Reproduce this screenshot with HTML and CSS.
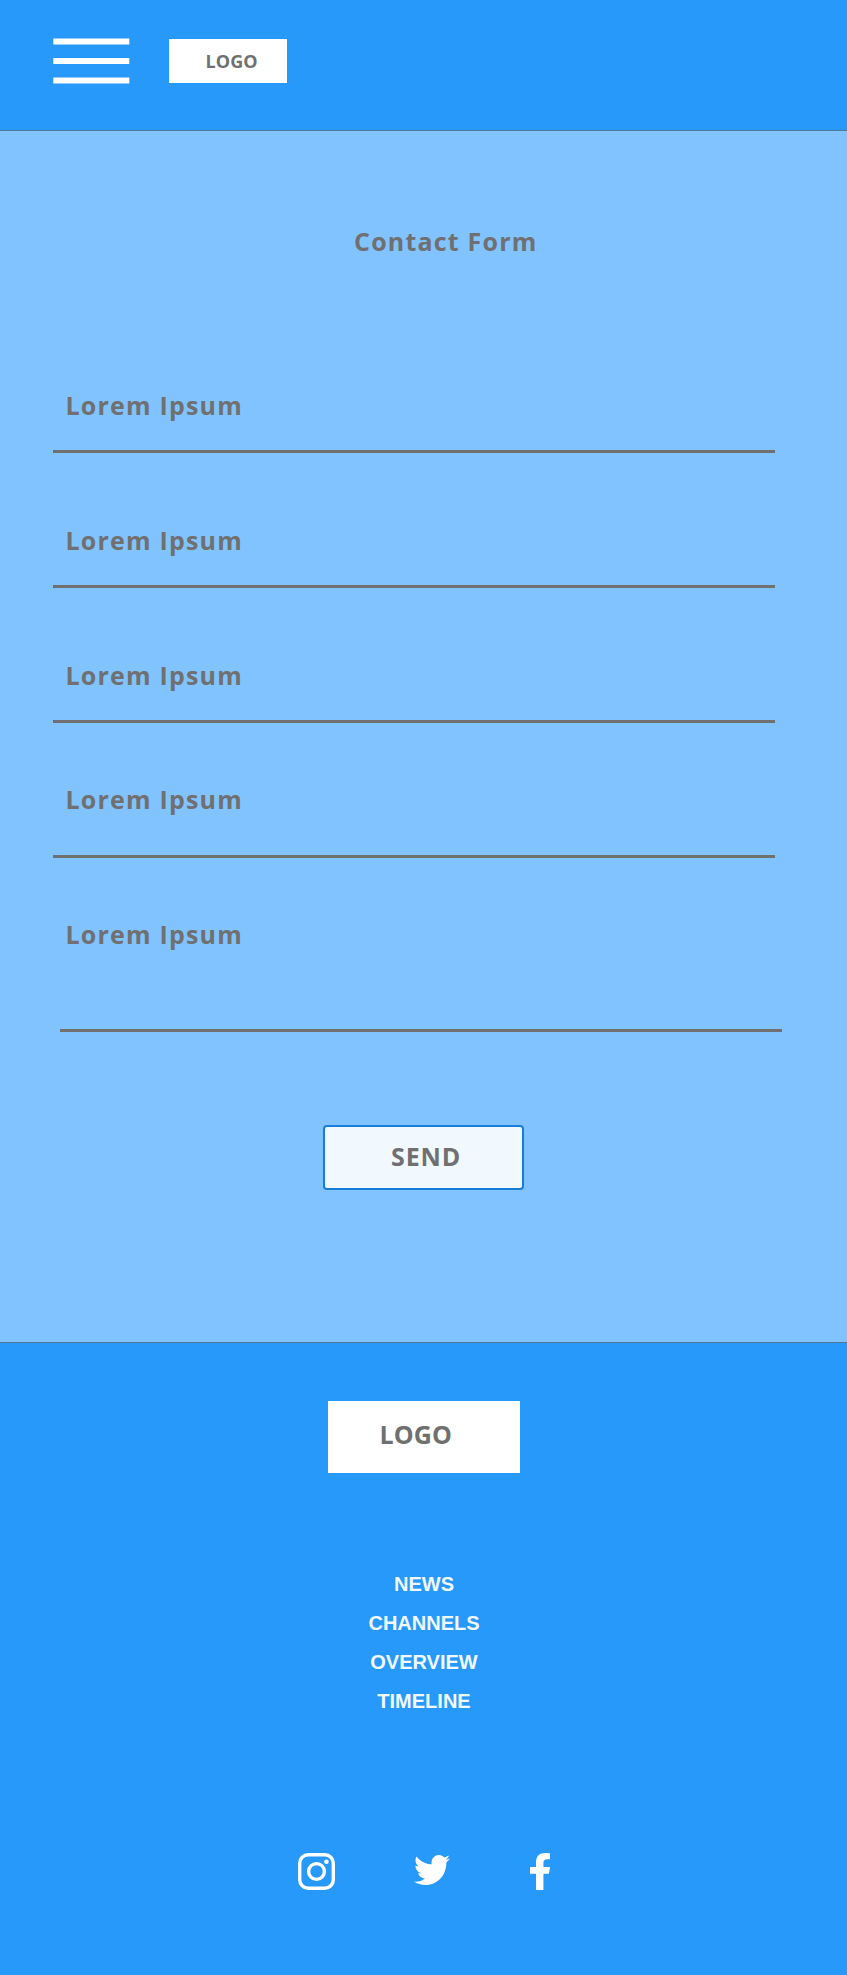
FILE: index.html
```html
<!DOCTYPE html>
<html lang="en">
<head>
<meta charset="utf-8">
<title>Contact Form</title>
<link rel="stylesheet" href="styles.css">
</head>
<body>
<header class="topbar">
  <svg class="menu" viewBox="0 0 78 48" width="78" height="48" fill="#fff" aria-label="Menu"><path d="M.3 .5h76v6H.3zM.3 20h76v6H.3zM.3 39.5h76v6H.3z"/></svg>
  <div class="logo logo-small"><span>LOGO</span></div>
</header>
<main class="content">
  <h1 class="title">Contact Form</h1>
  <form class="form">
    <label class="field field-first"><span>Lorem Ipsum</span></label>
    <label class="field"><span>Lorem Ipsum</span></label>
    <label class="field"><span>Lorem Ipsum</span></label>
    <label class="field field-near"><span>Lorem Ipsum</span></label>
    <label class="field field-message"><span>Lorem Ipsum</span></label>
    <button class="send" type="button"><span>SEND</span></button>
  </form>
</main>
<footer class="footer">
  <div class="logo logo-large"><span>LOGO</span></div>
  <nav class="links"><a>NEWS</a><a>CHANNELS</a><a>OVERVIEW</a><a>TIMELINE</a></nav>
  <div class="social">
    <svg class="instagram" viewBox="0 0 38 38" width="38" height="38"><rect x="1.7" y="1.7" width="33.6" height="33.6" rx="8.5" fill="none" stroke="#fff" stroke-width="3.4"/><circle cx="18.5" cy="18.5" r="7.9" fill="none" stroke="#fff" stroke-width="3.4"/><circle cx="28.4" cy="8.8" r="2.3" fill="#fff"/></svg>
    <svg class="twitter" viewBox="0 48 512 416" width="36" height="30" preserveAspectRatio="none"><path fill="#fff" d="M459.37 151.716c.325 4.548.325 9.097.325 13.645 0 138.72-105.583 298.558-298.558 298.558-59.452 0-114.68-17.219-161.137-47.106 8.447.974 16.568 1.299 25.34 1.299 49.055 0 94.213-16.568 130.274-44.832-46.132-.975-84.792-31.188-98.112-72.772 6.498.974 12.995 1.624 19.818 1.624 9.421 0 18.843-1.3 27.614-3.573-48.081-9.747-84.143-51.98-84.143-102.985v-1.299c13.969 7.797 30.214 12.67 47.431 13.319-28.264-18.843-46.781-51.005-46.781-87.391 0-19.492 5.197-37.36 14.294-52.954 51.655 63.675 129.3 105.258 216.365 109.807-1.624-7.797-2.599-15.918-2.599-24.04 0-57.828 46.782-104.934 104.934-104.934 30.213 0 57.502 12.67 76.67 33.137 23.715-4.548 46.456-13.32 66.599-25.34-7.798 24.366-24.366 44.833-46.132 57.827 21.117-2.273 41.584-8.122 60.426-16.243-14.292 20.791-32.161 39.308-52.628 54.253z"/></svg>
    <svg class="facebook" viewBox="22.9 0 270.5 512" width="20" height="37" preserveAspectRatio="none"><path fill="#fff" d="M279.14 288l14.22-92.66h-88.91v-60.13c0-25.35 12.42-50.06 52.24-50.06h40.42V6.26S260.43 0 225.36 0c-73.22 0-121.08 44.38-121.08 124.72v70.62H22.89V288h81.39v224h100.17V288z"/></svg>
  </div>
</footer>
</body>
</html>
```
FILE: styles.css
```css
* { box-sizing: border-box; }
body { margin: 0; width: 847px; background: #80c3ff; color: #707070; font-family: "Open Sans", "Noto Sans", sans-serif; font-weight: 700; }
.topbar { display: flex; align-items: flex-start; height: 131px; padding: 38px 0 0 53px; background: #2799fb; border-bottom: 1px solid #52789a; }
.logo { background: #fff; }
.logo-small { width: 118px; height: 44px; margin: 1px 0 0 38px; padding: 10px 0 0 36.5px; font-size: 18px; line-height: 25px; letter-spacing: .1px; }
.content { height: 1211px; padding-top: 93px; }
.title { margin: 0; padding-left: 354px; font-size: 25px; line-height: 34px; letter-spacing: 1.2px; white-space: nowrap; font-stretch: 94%; }
.form { display: flex; flex-direction: column; align-items: flex-start; padding: 126px 0 0 52.5px; }
.field { width: 722px; height: 135px; padding: 70px 0 0 13px; border-bottom: 3px solid #707070; font-size: 25px; line-height: 34px; letter-spacing: 1.2px; font-stretch: 94%; }
.field-first { height: 69px; padding-top: 4px; }
.field-near { padding-top: 59px; }
.field-message { height: 174px; padding: 59px 0 0 6px; margin-left: 7px; }
.send { width: 201px; height: 65px; margin: 93px 0 0 270.5px; padding: 0 0 3px 66px; border: 2px solid #157edb; border-radius: 4px; background: #f1f9ff; color: #707070; font: inherit; font-size: 25px; line-height: 34px; letter-spacing: .9px; text-align: left; }
.footer { display: flex; flex-direction: column; align-items: center; height: 633px; padding-top: 58px; background: #2799fb; border-top: 1px solid #52789a; }
.logo-large { width: 192px; height: 72px; margin-left: 1px; padding: 16px 0 0 51.5px; font-size: 25px; line-height: 34px; letter-spacing: .1px; }
.links { display: flex; flex-direction: column; align-items: center; margin-top: 92px; padding-left: 1px; color: #f1f9ff; font: 700 20px/39px "Liberation Sans", Arial, sans-serif; }
.social { display: flex; align-self: stretch; margin-top: 132px; padding-left: 298px; }
.twitter { margin: 2px 0 0 78px; }
.facebook { margin-left: 79.5px; }
```
